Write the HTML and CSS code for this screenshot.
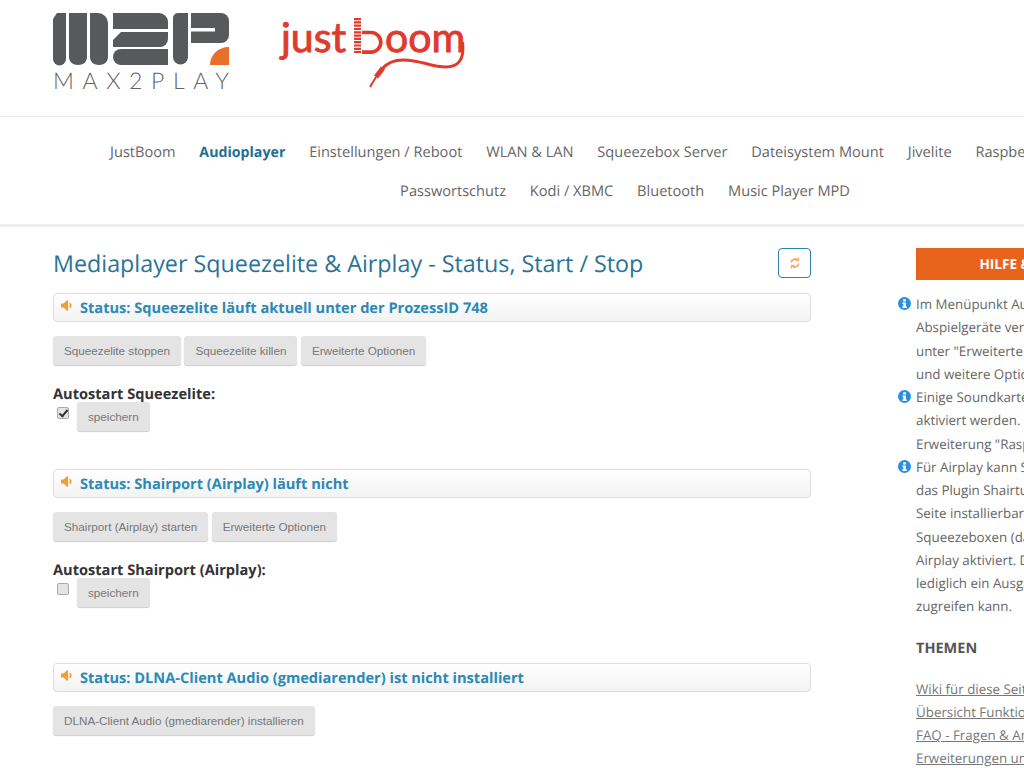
FILE: index.html
```html
<!DOCTYPE html>
<html lang="de">
<head>
  <meta charset="UTF-8">
  <meta name="viewport" content="width=device-width, initial-scale=1.0">
  <title>Max2Play - Audioplayer</title>
  <link rel="stylesheet" href="styles.css">
</head>
<body>
  <svg class="icon-defs" width="0" height="0" aria-hidden="true">
    <symbol id="icon-sound" viewBox="0 0 14 12">
      <path d="M0 3.700h2.800L6.400 .4c.6-.5 1.300-.2 1.300.6v10c0 .8-.7 1.100-1.300.6L2.800 8.300H0z"/>
      <path d="M9.300 2.700c2.900 1 2.900 5.600 0 6.600z"/>
    </symbol>
    <symbol id="icon-info" viewBox="0 0 14 14">
      <circle cx="7" cy="7" r="7" fill="#2a8fe0"/>
      <rect x="5.600" y="2.400" width="2.900" height="2.500" fill="#fff"/>
      <path d="M4.700 5.800h3.800v4.500h1v1.500H4.700v-1.500h1V7.300h-1z" fill="#fff"/>
    </symbol>
  </svg>

  <div class="page">
    <!-- Logos -->
    <header class="site-header">
      <svg class="logo-m2p" width="177" height="78" viewBox="0 0 177 78" role="img" aria-label="Max2Play">
        <g fill="#58595b">
          <path d="M4 0h9v46a6.500 6.500 0 0 1-13 0V6z"/>
          <path d="M16 0h18v44c0 5-4 8-9 8s-9-3-9-8z"/>
          <path d="M37 0h8a10 10 0 0 1 10 10v34c0 5-4 8-9 8s-9-3-9-8z"/>
          <path d="M60 0h46a9 9 0 0 1 9 9v7H60z"/>
          <path d="M60 27l8-8h47v7a8 8 0 0 1-8 8H60z"/>
          <path d="M60 44a8 8 0 0 1 8-8h47v16H68a8 8 0 0 1-8-8z"/>
          <path d="M125 0h10v44a7.500 7.500 0 0 1-15 0V5a5 5 0 0 1 5-5z"/>
          <path d="M138 0h30a8 8 0 0 1 8 8v14a8 8 0 0 1-8 8h-30z"/>
        </g>
        <rect x="138" y="15" width="24" height="3.500" fill="#fff"/>
        <path d="M157 52c0-10 8-18 19-18v18z" fill="#e8702a"/>
        <text class="logo-m2p-text" x="0" y="76">MAX2PLAY</text>
      </svg>
      <svg class="logo-boom" width="186" height="78" viewBox="0 0 186 78" role="img" aria-label="JustBoom">
        <text class="logo-boom-text" x="0" y="37">just</text>
        <text class="logo-boom-text" x="104" y="37">oom</text>
        <g stroke="#e03a2e" fill="none">
          <path d="M76.500 3V38" stroke-width="7" stroke-dasharray="2.200 1.100"/>
          <path d="M81 17.500h9a9.800 9.800 0 0 1 0 19.600h-9" stroke-width="3.600"/>
          <path d="M181.500 27C184 46 176 52 165 52C150 52 140 45 122 45C112 45 106 48 101 54" stroke-width="3"/>
          <path d="M102 53L95 62" stroke-width="5"/>
          <path d="M95 62L89 72" stroke-width="2"/>
        </g>
      </svg>
    </header>

    <!-- Navigation -->
    <nav class="main-nav">
      <a href="#">JustBoom</a>
      <a href="#" class="active">Audioplayer</a>
      <a href="#">Einstellungen / Reboot</a>
      <a href="#">WLAN &amp; LAN</a>
      <a href="#">Squeezebox Server</a>
      <a href="#">Dateisystem Mount</a>
      <a href="#">Jivelite</a>
      <a href="#">Raspberry Einstellungen</a>
      <a href="#">Passwortschutz</a>
      <a href="#">Kodi / XBMC</a>
      <a href="#">Bluetooth</a>
      <a href="#">Music Player MPD</a>
    </nav>

    <div class="content">
      <main class="main-col">
        <div class="title-row">
          <h1>Mediaplayer Squeezelite &amp; Airplay - Status, Start / Stop</h1>
          <a href="#" class="refresh-btn" aria-label="Neu laden">
            <svg width="10" height="12" viewBox="0 0 10 12" fill="none" stroke="#f0b068" stroke-width="1.800">
              <path d="M1.200 5.500A3.900 3.900 0 0 1 7.600 3"/>
              <path d="M8.800 6.500A3.900 3.900 0 0 1 2.400 9"/>
              <path d="M8.500 .6v3H5.500" stroke-width="1.300"/>
              <path d="M1.500 11.400v-3h3" stroke-width="1.300"/>
            </svg>
          </a>
        </div>

        <section class="block">
          <div class="status-bar">
            <svg class="sound-icon" width="13" height="11"><use href="#icon-sound"/></svg>
            <span>Status: Squeezelite läuft aktuell unter der ProzessID 748</span>
          </div>
          <div class="btn-row">
            <button class="btn">Squeezelite stoppen</button>
            <button class="btn">Squeezelite killen</button>
            <button class="btn">Erweiterte Optionen</button>
          </div>
          <p class="autostart-label">Autostart Squeezelite:</p>
          <div class="autostart-row">
            <input type="checkbox" checked>
            <button class="btn">speichern</button>
          </div>
        </section>

        <section class="block">
          <div class="status-bar">
            <svg class="sound-icon" width="13" height="11"><use href="#icon-sound"/></svg>
            <span>Status: Shairport (Airplay) läuft nicht</span>
          </div>
          <div class="btn-row">
            <button class="btn">Shairport (Airplay) starten</button>
            <button class="btn">Erweiterte Optionen</button>
          </div>
          <p class="autostart-label">Autostart Shairport (Airplay):</p>
          <div class="autostart-row">
            <input type="checkbox">
            <button class="btn">speichern</button>
          </div>
        </section>

        <section class="block block-last">
          <div class="status-bar">
            <svg class="sound-icon" width="13" height="11"><use href="#icon-sound"/></svg>
            <span>Status: DLNA-Client Audio (gmediarender) ist nicht installiert</span>
          </div>
          <div class="btn-row">
            <button class="btn">DLNA-Client Audio (gmediarender) installieren</button>
          </div>
        </section>
      </main>

      <!-- Sidebar -->
      <aside class="sidebar">
        <div class="help-head">HILFE &amp; INFORMATION</div>
        <ul class="help-list">
          <li>
            <svg width="13" height="13"><use href="#icon-info"/></svg>
            Im Menüpunkt Audioplayer können<br>Abspielgeräte verwaltet und<br>unter "Erweiterte Optionen" Parameter<br>und weitere Optionen gesetzt werden.
          </li>
          <li>
            <svg width="13" height="13"><use href="#icon-info"/></svg>
            Einige Soundkarten müssen zunächst<br>aktiviert werden. Dies geht über die<br>Erweiterung "Raspberry Settings".
          </li>
          <li>
            <svg width="13" height="13"><use href="#icon-info"/></svg>
            Für Airplay kann Shairport oder<br>das Plugin Shairtunes (auf dieser<br>Seite installierbar) genutzt werden.<br>Squeezeboxen (dann auch synchron)<br>Airplay aktiviert. Dabei gibt es<br>lediglich ein Ausgabegerät, das<br>zugreifen kann.
          </li>
        </ul>
        <h3>THEMEN</h3>
        <ul class="topic-list">
          <li><a href="#">Wiki für diese Seite</a></li>
          <li><a href="#">Übersicht Funktionen</a></li>
          <li><a href="#">FAQ - Fragen &amp; Antworten</a></li>
          <li><a href="#">Erweiterungen und Plugins</a></li>
        </ul>
      </aside>
    </div>
  </div>
</body>
</html>
```

FILE: styles.css
```css
/* Reset */
html, body {
  margin: 0;
  padding: 0;
  height: 768px;
  overflow: hidden;
  background-color: #fff;
  font-family: "Open Sans", sans-serif;
  color: #666;
  text-rendering: geometricPrecision;
}

.icon-defs {
  position: absolute;
}

.page {
  width: 1250px;
}

/* Header */
.site-header {
  display: flex;
  align-items: flex-start;
  gap: 51px;
  height: 103px;
  padding: 13px 0 0 53px;
  border-bottom: 1px solid #e8e8e8;
}

.site-header svg {
  overflow: visible;
}

.logo-m2p-text {
  font-family: Lato, sans-serif;
  font-size: 23px;
  font-weight: 300;
  letter-spacing: 8.600px;
  fill: #636466;
}

.logo-boom {
  margin-top: 2px;
}

.logo-boom-text {
  font-family: Lato, sans-serif;
  font-size: 41px;
  fill: #e03a2e;
  stroke: #e03a2e;
  stroke-width: 0.9px;
}

/* Navigation */
.main-nav {
  height: 110px;
  box-sizing: border-box;
  padding: 16px 75px 0;
  border-bottom: 3px solid #eee;
  text-align: center;
  line-height: 39px;
  font-size: 14.600px;
}

.main-nav a {
  margin: 0 10px;
  color: #666;
  text-decoration: none;
}

.main-nav a.active {
  color: #1f6e94;
  font-size: 14.200px;
  font-weight: 700;
}

/* Main column */
.content {
  display: flex;
  padding: 21px 0 0 53px;
}

.main-col {
  width: 758px;
}

.title-row {
  display: flex;
  justify-content: space-between;
  align-items: flex-start;
  height: 45px;
}

h1 {
  margin: -1px 0 0;
  font-size: 23.300px;
  font-weight: 400;
  line-height: 32px;
  color: #2a7397;
}

.refresh-btn {
  display: flex;
  align-items: center;
  justify-content: center;
  width: 31px;
  height: 28px;
  border: 1px solid #2a85a8;
  border-radius: 4px;
}

.block {
  height: 176px;
}

.block:nth-of-type(2) {
  height: 194px;
}

.status-bar {
  display: flex;
  align-items: center;
  gap: 6px;
  height: 27px;
  padding-left: 7px;
  border: 1px solid #ddd;
  border-radius: 4px;
  background: linear-gradient(#fff, #f3f3f3);
  font-size: 14.600px;
  font-weight: 700;
  color: #2b8ab5;
}

.sound-icon {
  margin-top: -5px;
  fill: #f0a030;
}

.btn-row {
  display: flex;
  gap: 3.500px;
  margin-top: 14px;
}

.btn {
  height: 29px;
  padding: 0 11px;
  border: none;
  border-radius: 3px;
  background-color: #e4e4e4;
  box-shadow: 0 1px 1px rgba(0, 0, 0, 0.2);
  font-family: "Liberation Sans", sans-serif;
  font-size: 11.700px;
  color: #777;
  cursor: pointer;
}

.autostart-label {
  margin: 19px 0 0;
  font-size: 14.600px;
  font-weight: 700;
  line-height: 20px;
  color: #333;
}

.autostart-row {
  display: flex;
  align-items: flex-start;
  gap: 8px;
  margin-top: -2px;
  padding-left: 4px;
}

.autostart-row input {
  appearance: none;
  position: relative;
  box-sizing: border-box;
  width: 12px;
  height: 12px;
  margin: 5px 0 0;
  border: 1px solid #aaa;
  border-radius: 2px;
  background-color: #e4e4e4;
}

.autostart-row input:checked::after {
  content: "";
  position: absolute;
  left: 3px;
  top: 0;
  width: 3px;
  height: 7px;
  border: solid #333;
  border-width: 0 2px 2px 0;
  transform: rotate(40deg);
}

/* Sidebar */
.sidebar {
  width: 281px;
  margin-left: 105px;
  font-size: 13.350px;
  line-height: 23.250px;
}

.help-head {
  height: 32px;
  background-color: #e8641b;
  color: #fff;
  font-size: 13.600px;
  font-weight: 700;
  line-height: 32px;
  text-align: center;
}

.help-list {
  margin: 13px 0 0;
  padding: 0;
  list-style: none;
  white-space: nowrap;
}

.help-list li {
  position: relative;
}

.help-list svg {
  position: absolute;
  left: -18px;
  top: 4px;
}

.sidebar h3 {
  margin: 18px 0 0;
  font-size: 14.500px;
  line-height: 24px;
  color: #555;
}

.topic-list {
  margin: 17px 0 0;
  padding: 0;
  list-style: none;
  white-space: nowrap;
}

.topic-list a {
  color: #777;
}
```
